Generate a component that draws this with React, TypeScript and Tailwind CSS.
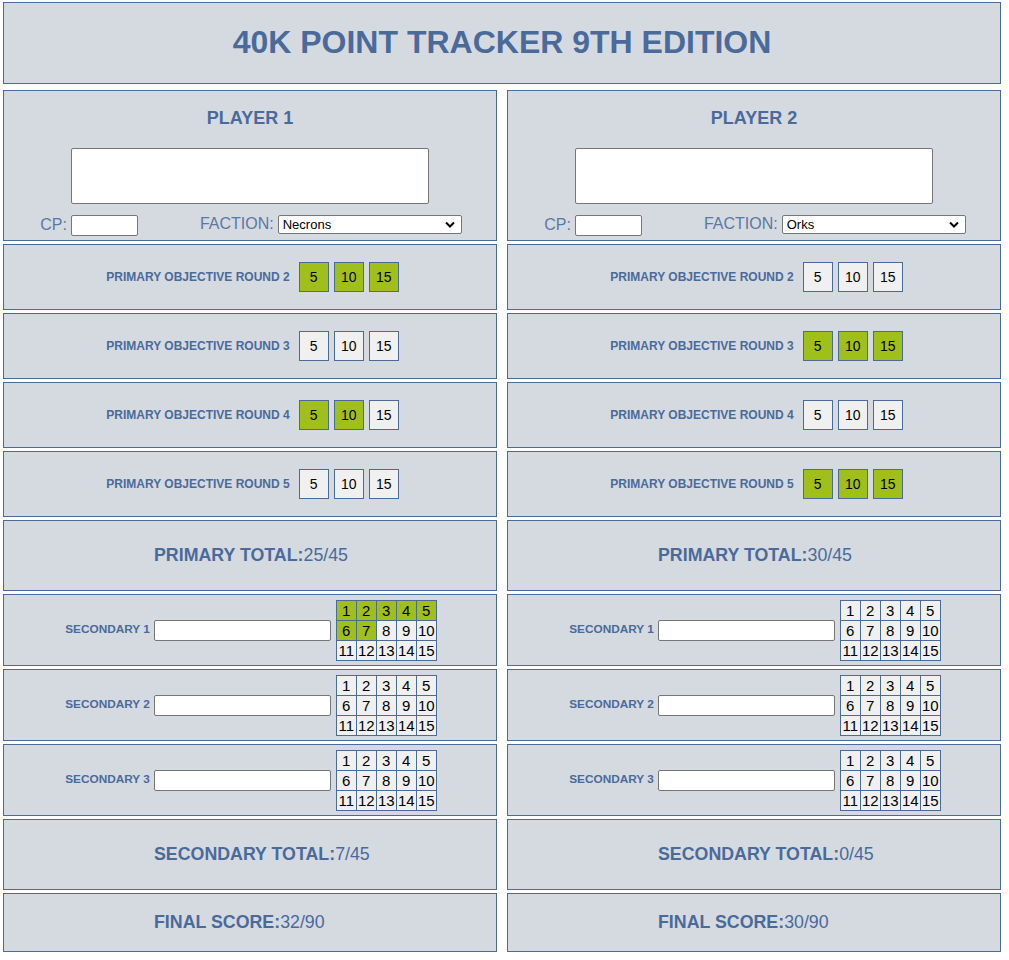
import React from "react";

const BLUE = "text-[#4a6a9a]";

function Box({ h, children, className = "" }: { h: string; children?: React.ReactNode; className?: string }) {
  return (
    <div className={`border border-[#4a6a9a] bg-[#d5dae1] ${h} flex items-center ${className}`}>
      {children}
    </div>
  );
}

function PrimaryRow({ round, sel }: { round: number; sel: boolean[] }) {
  const vals = [5, 10, 15];
  return (
    <Box h="h-[66px]" className="justify-center pl-[5px]">
      <div className="flex items-center">
        <span className={`text-[12px] font-bold ${BLUE} mr-[9px]`}>PRIMARY OBJECTIVE ROUND {round}</span>
        <div className="flex gap-[5px]">
          {vals.map((v, i) => (
            <div
              key={v}
              className={`w-[30px] h-[30px] border border-[#4a6a9a] flex items-center justify-center text-[14px] text-black ${
                sel[i] ? "bg-[#a0bf1a]" : "bg-[#f0f0f0]"
              }`}
            >
              {v}
            </div>
          ))}
        </div>
      </div>
    </Box>
  );
}

function SecondaryRow({ n, count }: { n: number; count: number }) {
  const cells = Array.from({ length: 15 }, (_, i) => i + 1);
  return (
    <Box h="h-[72px]" className="justify-center pl-[2px]">
      <div className="flex items-center">
        <span className={`text-[11.8px] font-bold ${BLUE} mr-[4px]`}>SECONDARY {n}</span>
        <div className="w-[177px] h-[21px] bg-white border border-[#767676] rounded-[2px]" />
        <div className="ml-[5px] grid grid-cols-[repeat(5,19px)] grid-rows-[repeat(3,19px)] gap-px p-px bg-[#4a6a9a]">
          {cells.map((c) => (
            <div
              key={c}
              className={`flex items-center justify-center text-[15px] leading-none text-black ${
                c <= count ? "bg-[#a0bf1a]" : "bg-[#f0f0f0]"
              }`}
            >
              {c}
            </div>
          ))}
        </div>
      </div>
    </Box>
  );
}

function TotalRow({ label, value, h }: { label: string; value: string; h: string }) {
  return (
    <Box h={h} className="justify-start pl-[150px]">
      <div className={`text-[17.8px] ${BLUE}`}>
        <span className="font-bold">{label}</span>
        <span>{value}</span>
      </div>
    </Box>
  );
}

function Column({
  player,
  faction,
  prim,
  sec,
  primTotal,
  secTotal,
  final,
}: {
  player: number;
  faction: string;
  prim: boolean[][];
  sec: number[];
  primTotal: string;
  secTotal: string;
  final: string;
}) {
  return (
    <div className="w-[494px] flex flex-col gap-[3px]">
      <div className="border border-[#4a6a9a] bg-[#d5dae1] h-[151px] flex flex-col items-center">
        <div className={`mt-[17px] h-[20px] leading-[20px] text-[18px] font-bold ${BLUE}`}>PLAYER {player}</div>
        <div className="mt-[20px] w-[358px] h-[56px] bg-white border border-[#767676] rounded-[2px]" />
        <div className="mt-[9px] flex items-center">
          <span className={`text-[16px] text-[#5a78a5] mr-[4px] ml-[2px]`}>CP:</span>
          <div className="w-[67px] h-[21px] bg-white border border-[#767676] rounded-[2px]" />
          <span className={`ml-[62px] text-[16px] text-[#5a78a5] mr-[4px] -mt-[3px]`}>FACTION:</span>
          <div className="w-[184px] h-[19px] -mt-[2px] bg-white border border-[#767676] rounded-[2px] flex items-center justify-between pl-[4px] pr-[6px]">
            <span className="text-[13px] text-black leading-none">{faction}</span>
            <svg width="10" height="7" viewBox="0 0 10 7">
              <path d="M1 1.5 L5 5.5 L9 1.5" fill="none" stroke="#000" strokeWidth="2" />
            </svg>
          </div>
        </div>
      </div>
      {prim.map((s, i) => (
        <PrimaryRow key={i} round={i + 2} sel={s} />
      ))}
      <TotalRow label="PRIMARY TOTAL:" value={primTotal} h="h-[71px]" />
      {sec.map((c, i) => (
        <SecondaryRow key={i} n={i + 1} count={c} />
      ))}
      <TotalRow label="SECONDARY TOTAL:" value={secTotal} h="h-[71px]" />
      <TotalRow label="FINAL SCORE:" value={final} h="h-[59px]" />
    </div>
  );
}

export default function App() {
  return (
    <div className="min-h-[960px] bg-white pt-[2px] pl-[3px]" style={{ fontFamily: '"Liberation Sans", Arial, sans-serif' }}>
      <div className="w-[998px] h-[82px] border border-[#4a6a9a] bg-[#d5dae1] flex items-center justify-center">
        <h1 className={`text-[32px] font-bold ${BLUE} -mt-[2px]`}>40K POINT TRACKER 9TH EDITION</h1>
      </div>
      <div className="mt-[6px] flex gap-[10px]">
        <Column
          player={1}
          faction="Necrons"
          prim={[
            [true, true, true],
            [false, false, false],
            [true, true, false],
            [false, false, false],
          ]}
          sec={[7, 0, 0]}
          primTotal="25/45"
          secTotal="7/45"
          final="32/90"
        />
        <Column
          player={2}
          faction="Orks"
          prim={[
            [false, false, false],
            [true, true, true],
            [false, false, false],
            [true, true, true],
          ]}
          sec={[0, 0, 0]}
          primTotal="30/45"
          secTotal="0/45"
          final="30/90"
        />
      </div>
    </div>
  );
}
